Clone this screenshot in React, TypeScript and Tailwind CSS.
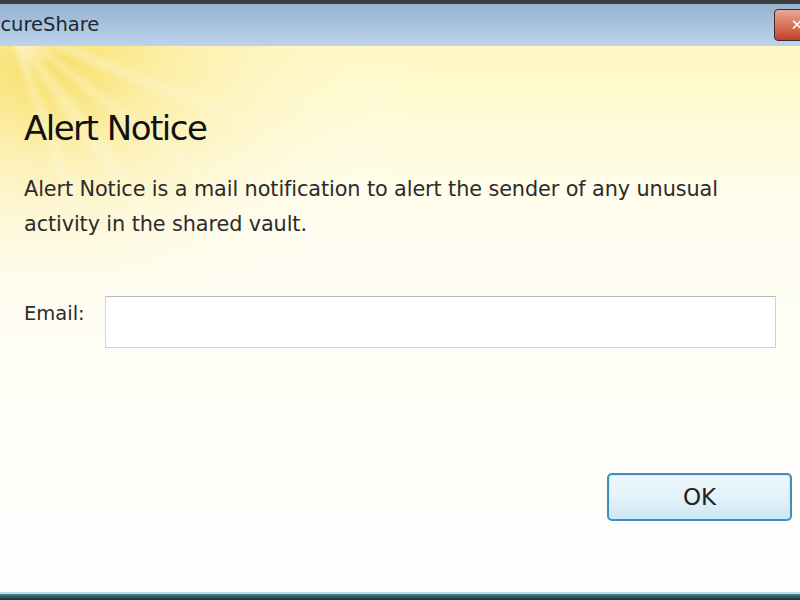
import { useState } from "react";

const uiFont = { fontFamily: "Tahoma, 'DejaVu Sans', 'Noto Sans', sans-serif" };

function SunRays() {
  // soft yellow glow with faint rays in the top-left corner of the dialog body
  const rays = [
    { a: 22, w: 10 },
    { a: 38, w: 8 },
    { a: 54, w: 12 },
    { a: 70, w: 8 },
  ];
  return (
    <svg
      className="pointer-events-none absolute left-0 top-0"
      width="440"
      height="340"
      viewBox="0 0 440 340"
    >
      <defs>
        <radialGradient id="glow" cx="0" cy="0" r="1" gradientUnits="userSpaceOnUse" gradientTransform="translate(50 20) scale(380 300)">
          <stop offset="0" stopColor="#f6d644" stopOpacity="0.8" />
          <stop offset="0.3" stopColor="#f9e584" stopOpacity="0.5" />
          <stop offset="1" stopColor="#ffffff" stopOpacity="0" />
        </radialGradient>
        <linearGradient id="ray" x1="0" y1="0" x2="1" y2="0">
          <stop offset="0" stopColor="#ffffff" stopOpacity="0.45" />
          <stop offset="1" stopColor="#ffffff" stopOpacity="0" />
        </linearGradient>
        <filter id="soft">
          <feGaussianBlur stdDeviation="3" />
        </filter>
      </defs>
      <rect width="440" height="340" fill="url(#glow)" />
      <g filter="url(#soft)">
        {rays.map((ray) => (
          <rect
            key={ray.a}
            x="0"
            y={-ray.w / 2}
            width="300"
            height={ray.w}
            fill="url(#ray)"
            transform={`translate(10 -20) rotate(${ray.a})`}
          />
        ))}
      </g>
    </svg>
  );
}

export default function App() {
  const [email, setEmail] = useState("");

  return (
    <div className="flex h-[600px] w-[800px] flex-col overflow-hidden bg-white" style={uiFont}>
      <div className="h-[4px] bg-[#3b3d40]" />

      <div className="flex h-[42px] items-center bg-gradient-to-b from-[#97b2cf] to-[#bcd4ec]">
        <span className="-ml-[24px] text-[19.5px] leading-none text-[#1c2633]">SecureShare</span>
        <div className="-mr-[20px] ml-auto flex h-[32px] w-[46px] items-center justify-center rounded-[4px] border border-[#3d2b2b] bg-gradient-to-b from-[#e9a795] via-[#d9745c] to-[#c2402a]">
          <span className="text-[15px] font-bold leading-none text-white">✕</span>
        </div>
      </div>

      <div className="relative flex flex-1 flex-col bg-gradient-to-b from-[#fff8c2] via-[#fffdf0] via-30% to-[#fefefe]">
        <SunRays />

        <div className="relative flex flex-1 flex-col px-[24px]">
          <h1 className="mt-[62px] text-[34px] leading-[40px] tracking-[-1.5px] text-[#111111]">
            Alert Notice
          </h1>

          <p className="mt-[24px] text-[20.8px] leading-[35px] tracking-[-0.1px] text-[#2b2b2b]">
            Alert Notice is a mail notification to alert the sender of any unusual
            <br />
            activity in the shared vault.
          </p>

          <div className="mt-[54px] flex items-center gap-[21px]">
            <label className="-mt-[16px] w-[60px] text-[19.5px] text-[#2b2b2b]">Email:</label>
            <input
              className="h-[52px] w-[675px] border border-[#d2d2d2] border-t-[#b8b8b8] bg-white px-2 text-[18px] outline-none"
              value={email}
              onChange={(event) => setEmail(event.target.value)}
            />
          </div>

          <div className="mt-[125px] flex justify-end">
            <button className="-mr-[16px] flex h-[48px] w-[185px] items-center justify-center rounded-[5px] border-2 border-[#3d91b9] bg-gradient-to-b from-[#eef8fd] via-[#e3f2fa] to-[#cfe6f3] text-[23px] text-[#222222] shadow-[inset_0_0_0_1px_#c8ecfb]">
              OK
            </button>
          </div>
        </div>

        <div className="h-[2px] bg-[#b9dfe6]" />
        <div className="h-[6px] bg-gradient-to-b from-[#4d8390] to-[#12303a]" />
      </div>
    </div>
  );
}
